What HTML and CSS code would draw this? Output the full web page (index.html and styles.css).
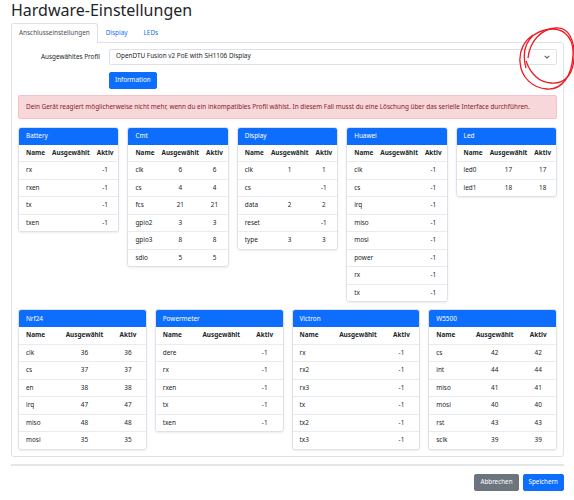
FILE: index.html
```html
<!DOCTYPE html>
<html lang="de">

<head>
    <meta charset="UTF-8">
    <meta name="viewport" content="width=device-width, initial-scale=1.0">
    <title>Hardware-Einstellungen</title>
    <link rel="stylesheet" href="styles.css">
</head>

<body>
    <div class="page">
        <h1 class="page-title">Hardware-Einstellungen</h1>

        <ul class="tabs">
            <li class="tab active">Anschlusseinstellungen</li>
            <li class="tab">Display</li>
            <li class="tab">LEDs</li>
        </ul>

        <div class="tab-content">
            <div class="form-row">
                <label class="form-label" for="profile">Ausgewähltes Profil</label>
                <div class="form-field">
                    <div class="select" id="profile">
                        <span>OpenDTU Fusion v2 PoE with SH1106 Display</span>
                        <svg class="chevron" width="6" height="4" viewBox="0 0 6 4">
                            <polyline points="0.7,0.8 3,3 5.3,0.8" fill="none" stroke="#5a6169" stroke-width="1.1"/>
                        </svg>
                    </div>
                    <button type="button" class="btn btn-primary">Information</button>
                </div>
            </div>

            <div class="alert">
                Dein Gerät reagiert möglicherweise nicht mehr, wenn du ein inkompatibles Profil wählst. In diesem Fall musst du eine Löschung über das serielle Interface durchführen.
            </div>

            <!-- first row: 5 pin groups -->
            <div class="pin-grid cols-5">
                <div class="pin-card">
                    <div class="pin-card-header">Battery</div>
                    <table class="pin-table">
                        <thead><tr><th>Name</th><th>Ausgewählt</th><th>Aktiv</th></tr></thead>
                        <tbody>
                            <tr><td>rx</td><td></td><td>-1</td></tr>
                            <tr><td>rxen</td><td></td><td>-1</td></tr>
                            <tr><td>tx</td><td></td><td>-1</td></tr>
                            <tr><td>txen</td><td></td><td>-1</td></tr>
                        </tbody>
                    </table>
                </div>
                <div class="pin-card">
                    <div class="pin-card-header">Cmt</div>
                    <table class="pin-table">
                        <thead><tr><th>Name</th><th>Ausgewählt</th><th>Aktiv</th></tr></thead>
                        <tbody>
                            <tr><td>clk</td><td>6</td><td>6</td></tr>
                            <tr><td>cs</td><td>4</td><td>4</td></tr>
                            <tr><td>fcs</td><td>21</td><td>21</td></tr>
                            <tr><td>gpio2</td><td>3</td><td>3</td></tr>
                            <tr><td>gpio3</td><td>8</td><td>8</td></tr>
                            <tr><td>sdio</td><td>5</td><td>5</td></tr>
                        </tbody>
                    </table>
                </div>
                <div class="pin-card">
                    <div class="pin-card-header">Display</div>
                    <table class="pin-table">
                        <thead><tr><th>Name</th><th>Ausgewählt</th><th>Aktiv</th></tr></thead>
                        <tbody>
                            <tr><td>clk</td><td>1</td><td>1</td></tr>
                            <tr><td>cs</td><td></td><td>-1</td></tr>
                            <tr><td>data</td><td>2</td><td>2</td></tr>
                            <tr><td>reset</td><td></td><td>-1</td></tr>
                            <tr><td>type</td><td>3</td><td>3</td></tr>
                        </tbody>
                    </table>
                </div>
                <div class="pin-card">
                    <div class="pin-card-header">Huawei</div>
                    <table class="pin-table">
                        <thead><tr><th>Name</th><th>Ausgewählt</th><th>Aktiv</th></tr></thead>
                        <tbody>
                            <tr><td>clk</td><td></td><td>-1</td></tr>
                            <tr><td>cs</td><td></td><td>-1</td></tr>
                            <tr><td>irq</td><td></td><td>-1</td></tr>
                            <tr><td>miso</td><td></td><td>-1</td></tr>
                            <tr><td>mosi</td><td></td><td>-1</td></tr>
                            <tr><td>power</td><td></td><td>-1</td></tr>
                            <tr><td>rx</td><td></td><td>-1</td></tr>
                            <tr><td>tx</td><td></td><td>-1</td></tr>
                        </tbody>
                    </table>
                </div>
                <div class="pin-card">
                    <div class="pin-card-header">Led</div>
                    <table class="pin-table">
                        <thead><tr><th>Name</th><th>Ausgewählt</th><th>Aktiv</th></tr></thead>
                        <tbody>
                            <tr><td>led0</td><td>17</td><td>17</td></tr>
                            <tr><td>led1</td><td>18</td><td>18</td></tr>
                        </tbody>
                    </table>
                </div>
            </div>

            <!-- second row: 4 pin groups -->
            <div class="pin-grid cols-4">
                <div class="pin-card">
                    <div class="pin-card-header">Nrf24</div>
                    <table class="pin-table">
                        <thead><tr><th>Name</th><th>Ausgewählt</th><th>Aktiv</th></tr></thead>
                        <tbody>
                            <tr><td>clk</td><td>36</td><td>36</td></tr>
                            <tr><td>cs</td><td>37</td><td>37</td></tr>
                            <tr><td>en</td><td>38</td><td>38</td></tr>
                            <tr><td>irq</td><td>47</td><td>47</td></tr>
                            <tr><td>miso</td><td>48</td><td>48</td></tr>
                            <tr><td>mosi</td><td>35</td><td>35</td></tr>
                        </tbody>
                    </table>
                </div>
                <div class="pin-card">
                    <div class="pin-card-header">Powermeter</div>
                    <table class="pin-table">
                        <thead><tr><th>Name</th><th>Ausgewählt</th><th>Aktiv</th></tr></thead>
                        <tbody>
                            <tr><td>dere</td><td></td><td>-1</td></tr>
                            <tr><td>rx</td><td></td><td>-1</td></tr>
                            <tr><td>rxen</td><td></td><td>-1</td></tr>
                            <tr><td>tx</td><td></td><td>-1</td></tr>
                            <tr><td>txen</td><td></td><td>-1</td></tr>
                        </tbody>
                    </table>
                </div>
                <div class="pin-card">
                    <div class="pin-card-header">Victron</div>
                    <table class="pin-table">
                        <thead><tr><th>Name</th><th>Ausgewählt</th><th>Aktiv</th></tr></thead>
                        <tbody>
                            <tr><td>rx</td><td></td><td>-1</td></tr>
                            <tr><td>rx2</td><td></td><td>-1</td></tr>
                            <tr><td>rx3</td><td></td><td>-1</td></tr>
                            <tr><td>tx</td><td></td><td>-1</td></tr>
                            <tr><td>tx2</td><td></td><td>-1</td></tr>
                            <tr><td>tx3</td><td></td><td>-1</td></tr>
                        </tbody>
                    </table>
                </div>
                <div class="pin-card">
                    <div class="pin-card-header">W5500</div>
                    <table class="pin-table">
                        <thead><tr><th>Name</th><th>Ausgewählt</th><th>Aktiv</th></tr></thead>
                        <tbody>
                            <tr><td>cs</td><td>42</td><td>42</td></tr>
                            <tr><td>int</td><td>44</td><td>44</td></tr>
                            <tr><td>miso</td><td>41</td><td>41</td></tr>
                            <tr><td>mosi</td><td>40</td><td>40</td></tr>
                            <tr><td>rst</td><td>43</td><td>43</td></tr>
                            <tr><td>sclk</td><td>39</td><td>39</td></tr>
                        </tbody>
                    </table>
                </div>
            </div>
        </div>

        <hr class="divider">

        <div class="actions">
            <button type="button" class="btn btn-secondary">Abbrechen</button>
            <button type="button" class="btn btn-primary">Speichern</button>
        </div>

        <!-- red hand-drawn marking around the select arrow -->
        <svg class="scribble" width="74" height="75" viewBox="0 0 74 75">
            <path d="M26,48 C21,30 27,14 45,10 C61,6 74,15 73,35 C72,56 62,70 47,69 C33,68 21,58 20,42 C19,31 24,21 33,15" fill="none" stroke="#ec1c24" stroke-width="1.3"/>
            <path d="M28,38 C30,21 41,9 56,8 C69,7 75,21 74,38 C73,55 65,64 51,63 C37,62 30,52 26,41" fill="none" stroke="#ec1c24" stroke-width="1.3"/>
        </svg>
    </div>
</body>

</html>
```

FILE: styles.css
```css
* {
    box-sizing: border-box;
}

body {
    margin: 0;
    background-color: #fff;
    color: #212529;
    font-family: "Noto Sans", "Open Sans", sans-serif;
    font-size: 6.4px;
    line-height: 10.5px;
}

.page {
    position: relative;
    padding-left: 11px;
    width: 564px;
}

.page-title {
    margin: 0 0 3px;
    font-size: 16px;
    font-weight: 400;
    line-height: 20px;
}

/* Tabs */
.tabs {
    display: flex;
    margin: 0;
    padding: 0;
    list-style: none;
}

.tab {
    padding: 3.5px 7px;
    color: #0d6efd;
    border: 1px solid transparent;
    border-bottom: none;
    border-radius: 3px 3px 0 0;
}

.tab.active {
    color: #495057;
    background-color: #fff;
    border-color: #dee2e6;
    margin-bottom: -1px;
    position: relative;
    padding-bottom: 4.5px;
}

.tab-content {
    border: 1px solid #dee2e6;
    border-radius: 0 3px 3px 3px;
    padding: 6px;
}

/* Profile selection */
.form-row {
    display: flex;
}

.form-label {
    width: 91px;
    padding-right: 9px;
    text-align: right;
    line-height: 16px;
}

.form-field {
    flex: 1;
    display: flex;
    flex-direction: column;
    align-items: flex-start;
}

.select {
    display: flex;
    align-items: center;
    justify-content: space-between;
    align-self: stretch;
    height: 16px;
    padding: 0 6px 0 6px;
    border: 1px solid #dee2e6;
    border-radius: 2px;
}

.btn {
    display: inline-block;
    padding: 2.5px 5px;
    font-family: inherit;
    font-size: 6.3px;
    line-height: 10px;
    color: #fff;
    border: 1px solid transparent;
    border-radius: 2px;
    cursor: pointer;
}

.btn-primary {
    background-color: #0d6efd;
    border-color: #0d6efd;
}

.btn-secondary {
    background-color: #6c757d;
    border-color: #6c757d;
}

.form-field .btn {
    margin-top: 7px;
}

.alert {
    margin: 6px 0 8px;
    padding: 6px 7px 5.5px;
    color: #842029;
    background-color: #f8d7da;
    border: 1px solid #f5c2c7;
    border-radius: 2px;
}

/* Pin cards */
.pin-grid {
    display: grid;
    gap: 8px;
    align-items: start;
}

.pin-grid.cols-5 {
    grid-template-columns: repeat(5, 1fr);
    margin-bottom: 7px;
}

.pin-grid.cols-4 {
    grid-template-columns: repeat(4, 1fr);
}

.pin-card {
    border: 1px solid #dee2e6;
    border-radius: 3px;
    overflow: hidden;
    box-shadow: 0 1px 2px rgba(0, 0, 0, 0.08);
}

.pin-card-header {
    padding: 3.5px 7px 3px;
    color: #fff;
    background-color: #0d6efd;
}

.pin-table {
    width: 100%;
    border-collapse: collapse;
}

.pin-table th,
.pin-table td {
    padding: 3px 3.5px;
    text-align: center;
    border-bottom: 1px solid #e9ecef;
    white-space: nowrap;
}

.pin-table th {
    font-weight: 700;
}

.pin-table th:first-child,
.pin-table td:first-child {
    padding-left: 7px;
    text-align: left;
}

.pin-table th:last-child,
.pin-table td:last-child {
    padding-right: 6px;
}

.pin-table tr:last-child td {
    border-bottom: none;
}

.divider {
    margin: 7px 0 8px;
    border: none;
    border-top: 2px solid #e3e6e9;
}

.actions {
    display: flex;
    justify-content: flex-end;
    gap: 4px;
}

.scribble {
    position: absolute;
    left: 500px;
    top: 20px;
    pointer-events: none;
}
```
